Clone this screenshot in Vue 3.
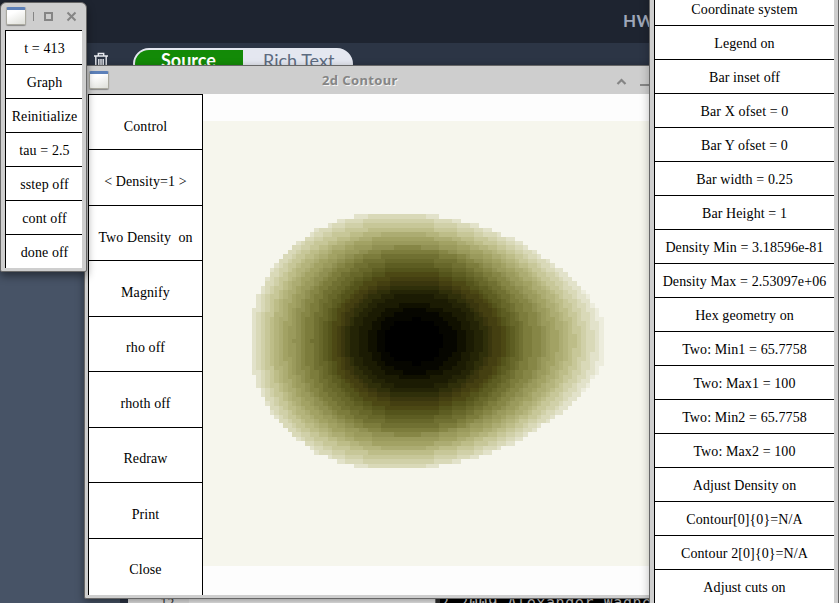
<script setup>
const runItems = ['t = 413', 'Graph', 'Reinitialize', 'tau = 2.5', 'sstep off', 'cont off', 'done off']
const contourItems = ['Control', '< Density=1 >', 'Two Density\u00a0 on', 'Magnify', 'rho off', 'rhoth off', 'Redraw', 'Print', 'Close']
const settingItems = [
  'Coordinate system', 'Legend on', 'Bar inset off', 'Bar X ofset = 0', 'Bar Y ofset = 0',
  'Bar width = 0.25', 'Bar Height = 1', 'Density Min = 3.18596e-81', 'Density Max = 2.53097e+06',
  'Hex geometry on', 'Two: Min1 = 65.7758', 'Two: Max1 = 100', 'Two: Min2 = 65.7758',
  'Two: Max2 = 100', 'Adjust Density on', 'Contour[0]{0}=N/A', 'Contour 2[0]{0}=N/A', 'Adjust cuts on',
]

// Density plot: a 100x100 grid, coloured by level
const CELL = 4.45
const palette = [
  '#000000', '#060600', '#101000', '#1b1b03', '#242406', '#2f2f0a', '#3a360e', '#443f11', '#4c4814',
  '#54541b', '#5d5d22', '#67672a', '#707032', '#7c7c3c', '#868646', '#909052', '#9a9a5c', '#a2a264',
  '#acac72', '#b4b47c', '#bdbd88', '#c7c798', '#d0d0a8', '#d9d9b8', '#e2e2ca', '#ececdc',
]
// Reach of each level above, left and right of the centre
const vertical = [22.5, 32, 37.5, 47, 51.6, 56, 60.6, 65, 69.4, 74, 78, 82.6, 87.6, 91.6, 94, 96.5, 100.6, 104.6, 108, 110, 113.6, 118.6, 122.6, 126.5, 130, 132]
const west = [30, 39, 47, 56, 65, 70, 74, 78, 83, 87, 92, 97, 103, 110, 116, 121, 126, 131, 136, 141, 145, 150, 154, 159, 164, 169]
const east = [28, 41, 50, 59, 68, 73, 77, 86, 91, 95, 100, 105, 110, 117, 126, 131, 137, 143, 149, 154, 160, 166, 172, 179, 186, 192]

// Extent of the filled region, from the top row down to the middle one
const leftEdge = [354, 336, 327, 314, 310, 305, 296, 292, 287, 283, 278, 274, 270, 270, 265, 265, 261, 261, 256, 256, 256, 252, 252, 252, 252, 252, 252, 252, 252]
const rightEdge = [439, 461, 479, 492, 501, 515, 524, 528, 537, 541, 550, 555, 564, 568, 573, 577, 581, 586, 590, 590, 594, 599, 599, 604, 604, 604, 604, 604, 604]

function levelAt(x, dy) {
  for (let i = 0; i < palette.length; i++) {
    const t = i / (palette.length - 1)
    const apex = 415.5 - 19 * t ** 1.6
    const reach = x < apex ? apex - 415 + west[i] : 415 + east[i] - apex
    const p = x < apex ? 2.1 + 0.2 * t : 2.05 - 0.19 * t
    if ((Math.abs(x - apex) / reach) ** p + (Math.abs(dy) / vertical[i]) ** p <= 1) return i
  }
  return palette.length - 1
}

const paths = palette.map(() => '')
for (let row = 0; row < 57; row++) {
  const k = row > 28 ? 56 - row : row
  const y0 = Math.floor(214.8 + row * CELL)
  const y1 = Math.floor(214.8 + (row + 1) * CELL)
  for (let col = 11; col < 90; col++) {
    const x0 = Math.floor(203.5 + col * CELL)
    const x1 = Math.floor(203.5 + (col + 1) * CELL)
    const mid = (x0 + x1) / 2
    if (mid < leftEdge[k] || mid > rightEdge[k]) continue
    const level = levelAt(mid, (row - 28) * CELL)
    paths[level] += `M${x0 - 203} ${y0 - 95}H${x1 - 203}V${y1 - 95}H${x0 - 203}z`
  }
}
</script>

<template>
  <main class="desktop">
    <div class="topbar"><span class="project">HW</span></div>
    <div class="toolbar">
      <svg class="trash" width="16" height="18" viewBox="0 0 16 18">
        <path d="M1 4H15M5.3 3.5V1.5H10.7V3.5M2.8 4V17H13.2V4M5.8 7V15M8 7V15M10.2 7V15" fill="none" stroke="#e8eaf0" stroke-width="1.4" />
      </svg>
      <div class="switch"><span class="source">Source</span><span class="rich">Rich Text</span></div>
    </div>
    <div class="strip">
      <div class="edge"></div>
      <div class="gutter"><span>12</span></div>
      <div class="editor"></div>
      <div class="terminal"><span>2 2009 Alexander Wagner</span></div>
    </div>

    <section class="window contour">
      <header class="titlebar">
        <i class="app-icon"></i>
        <span class="title">2d Contour</span>
        <svg class="controls" width="36" height="12" viewBox="0 0 36 12">
          <path d="M1.5 8L5.5 4L9.5 8" fill="none" stroke="#858585" stroke-width="2.2" />
          <path d="M24 9H34" stroke="#858585" stroke-width="2" />
        </svg>
      </header>
      <div class="body">
        <nav class="menu tall">
          <button v-for="item in contourItems" :key="item">{{ item }}</button>
        </nav>
        <div class="plot">
          <svg width="447" height="499" viewBox="0 0 447 499" shape-rendering="crispEdges">
            <rect y="26" width="447" height="445" fill="#f6f6ed" />
            <path v-for="(d, i) in paths" :key="i" :d="d" :fill="palette[i]" />
          </svg>
        </div>
      </div>
    </section>

    <section class="window run">
      <header class="titlebar">
        <i class="app-icon"></i>
        <svg width="50" height="14" viewBox="0 0 50 14">
          <path d="M2.5 3V12" stroke="#858585" stroke-width="1" />
          <rect x="14" y="4" width="7" height="7" fill="none" stroke="#858585" stroke-width="2" />
          <path d="M36.5 3.5L44.5 11.5M44.5 3.5L36.5 11.5" stroke="#858585" stroke-width="2" />
        </svg>
      </header>
      <nav class="menu">
        <button v-for="item in runItems" :key="item">{{ item }}</button>
      </nav>
    </section>

    <section class="window settings">
      <nav class="menu">
        <button v-for="item in settingItems" :key="item">{{ item }}</button>
      </nav>
    </section>
  </main>
</template>

<style>
body { margin: 0; overflow: hidden; }
</style>

<style scoped>
* { box-sizing: border-box; }
.desktop { position: relative; display: flex; flex-direction: column; width: 839px; height: 603px; overflow: hidden; background: #475366; }
.topbar { height: 43px; flex: none; background: #1e2430; padding: 10px 0 0 623px; }
.project { display: block; font: 700 17px/22px Lato, sans-serif; letter-spacing: .4px; color: #9fa7b9; }
.toolbar { display: flex; height: 37px; flex: none; background: #2c3545; padding: 5px 0 0 93px; }
.trash { margin-top: 4px; }
.switch { display: flex; width: 220px; height: 32px; margin-left: 24px; border: 2px solid #e4e7f0; border-radius: 16px; background: #e4e7f0; overflow: hidden; font: 400 18px/20px Lato, sans-serif; }
.source { width: 108px; padding-left: 26px; background: #138a07; color: #fff; font-weight: 700; }
.rich { padding-left: 20px; color: #5d6b80; }
.strip { display: flex; height: 10px; margin-top: auto; padding-left: 120px; background: #475366; }
.edge { width: 8px; background: #2c3545; }
.gutter { width: 61px; padding-left: 32px; background: #ececec; font: 12px/14px "DejaVu Sans Mono", monospace; color: #444; overflow: hidden; }
.gutter span { display: block; margin-top: 3px; }
.editor { width: 247px; background: #f8f8f8; border-right: 1px solid #777; }
.terminal { width: 214px; border-left: 4px solid #333; background: #000; color: #d0d0d0; font: 15px/16px "DejaVu Sans Mono", monospace; white-space: pre; overflow: hidden; }
.terminal span { display: block; margin-top: 2px; letter-spacing: .6px; }
.window { position: absolute; background: #cecece; border: 1px solid #676767; }
.contour { left: 84px; top: 65px; width: 580px; height: 534px; padding: 0 0 4px 3px; border-radius: 0 0 2px 2px; box-shadow: 0 3px 8px rgba(0, 0, 0, .4); }
.run { left: 0; top: 2px; width: 87px; height: 270px; padding: 0 4px 3px 4px; border-radius: 6px 6px 2px 2px; box-shadow: 0 4px 9px rgba(0, 0, 0, .45); }
.settings { left: 649px; top: -10px; width: 190px; height: 630px; padding: 0 4px; box-shadow: -1px 0 8px rgba(0, 0, 0, .22); }
.titlebar { display: flex; align-items: center; height: 28px; }
.run .titlebar { height: 27px; padding: 0 0 2px 1px; gap: 5px; }
.app-icon { display: block; flex: none; width: 20px; height: 18px; border: 1px solid #aaa99f; border-radius: 2px; border-top: 3px solid #5c80b9; background: linear-gradient(155deg, #fff 25%, #dedfd9); box-shadow: 0 1px 1px #888; }
.contour .app-icon { margin-left: 1px; }
.title { margin-left: 213px; width: 294px; font: 700 13px/18px "Noto Sans", sans-serif; letter-spacing: .38px; color: #858585; text-shadow: 1px 1px #f4f4f4; }
.controls { flex: none; margin-top: 3px; }
.body { display: flex; height: 501px; }
.menu { display: grid; grid-auto-rows: 34px; background: #fff; border-left: 1px solid #000; overflow: hidden; }
.menu button { display: flex; align-items: center; justify-content: center; min-width: 0; padding: 2px 0 0; border: 0; border-top: 1px solid #000; background: #fff; color: #000; font: 14px/18px "Liberation Serif", serif; letter-spacing: .1px; white-space: nowrap; }
.run .menu { height: 238px; }
.run .menu button { padding-left: 1px; }
.tall { flex: none; width: 115px; grid-auto-rows: 55.45px; border-right: 1px solid #000; }
.menu.tall { grid-auto-rows: 55.45px; }
.tall button { padding-top: 9px; }
.plot { padding-top: 1px; background: #fdfdfd; overflow: hidden; }
.plot svg { display: block; }
</style>
